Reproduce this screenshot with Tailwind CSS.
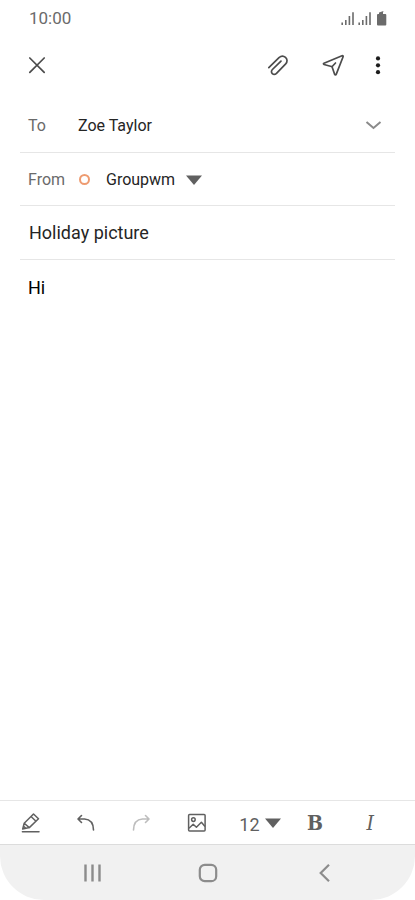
<!DOCTYPE html>
<html lang="en">
<head>
    <meta charset="utf-8" />
    <meta name="viewport" content="width=device-width, initial-scale=1" />
    <script src="https://cdn.jsdelivr.net/npm/@tailwindcss/browser@4"></script>
    <title>Holiday picture</title>
</head>
<body class="bg-white font-['Roboto',sans-serif] text-[#252525]">
    <div class="flex flex-col min-h-screen">

        <!-- status bar -->
        <div class="flex items-center justify-between h-9 pt-px pl-[29px] pr-7 text-[#6b6b6b]">
            <span class="text-[17px]">10:00</span>
            <div class="flex items-center gap-1">
                <svg class="w-[13px] h-4" viewBox="0 0 13 16" fill="none" stroke="currentColor" stroke-width="1.6">
                    <path d="M1.2 14v-2.5M4.8 14V9M8.4 14V5M12 14V1.2" />
                </svg>
                <svg class="w-[13px] h-4" viewBox="0 0 13 16" fill="none" stroke="currentColor" stroke-width="1.6">
                    <path d="M1.2 14v-2.5M4.8 14V9M8.4 14V5M12 14V1.2" />
                </svg>
                <svg class="w-3 h-4" viewBox="0 0 12 16" fill="currentColor">
                    <path d="M4 1.5 8.5 0l-.5 1.500v1.500h2.300a1 1 0 0 1 1 1v9.500a1 1 0 0 1-1 1H3a1 1 0 0 1-1-1V4a1 1 0 0 1 1-1h1z" />
                </svg>
            </div>
        </div>

        <!-- top actions -->
        <header class="flex items-center h-[58px] px-[25px] text-[#4c4c4c]">
            <button type="button" aria-label="Close">
                <svg class="w-6 h-6" viewBox="0 0 24 24" fill="none" stroke="currentColor" stroke-width="1.7" stroke-linecap="round">
                    <path d="m4.8 5 14.4 14.4M19.2 5 4.800 19.400" />
                </svg>
            </button>
            <button type="button" aria-label="Attach" class="ml-auto mr-[31px]">
                <svg class="w-6 h-6" viewBox="0 0 24 24" fill="none" stroke="currentColor" stroke-width="1.7" stroke-linecap="round" stroke-linejoin="round">
                    <path d="M1.800 14.600 12 4.600c2-1.800 4.600-1.900 6.500-.3 2 1.700 2 4.800.2 6.600L9.500 20.300c-1.300 1.300-3.100 1.300-4.200.3-1.200-1.100-1.100-2.900.1-4.100l8.600-8.400" />
                </svg>
            </button>
            <button type="button" aria-label="Send" class="mr-5">
                <svg class="w-6 h-6" viewBox="0 0 24 24" fill="none" stroke="currentColor" stroke-width="1.7" stroke-linecap="round" stroke-linejoin="round">
                    <path d="M2 10.300 20 2.700c.8-.3 1.400.3 1.100 1.100L14.200 21.400c-.3.8-1.200.8-1.500.1l-2.400-7.100a1.500 1.500 0 0 0-.9-.9L2 11.500c-.8-.3-.7-.9 0-1.200zM10.200 13.500l3.300-3.500" />
                </svg>
            </button>
            <button type="button" aria-label="More options" class="text-[#1c1c1c]">
                <svg class="w-6 h-6" viewBox="0 0 24 24" fill="currentColor">
                    <circle cx="12" cy="5.4" r="2.1" />
                    <circle cx="12" cy="12.3" r="2.1" />
                    <circle cx="12" cy="19.2" r="2.1" />
                </svg>
            </button>
        </header>

        <!-- message -->
        <form class="flex flex-col grow px-5 pt-[5px]">
            <div class="flex items-center h-[54px] pt-px pl-2 pr-3 border-b border-[#e6e6e6]">
                <label for="to" class="w-[50px] shrink-0 text-[#6a6a6a]">To</label>
                <input id="to" type="text" value="Zoe Taylor" class="grow min-w-0 outline-none" />
                <button type="button" aria-label="Show Cc and Bcc" class="text-[#8a8a8a]">
                    <svg class="w-[18px] h-[18px]" viewBox="0 0 18 18" fill="none" stroke="currentColor" stroke-width="2">
                        <path d="m1.500 5 7 6 7-6" />
                    </svg>
                </button>
            </div>
            <div class="flex items-center h-[53px] pt-px pl-2 border-b border-[#e6e6e6]">
                <label for="from" class="w-[50px] shrink-0 text-[#6a6a6a]">From</label>
                <span class="size-[11px] ml-px mb-px border-2 border-[#ee9b70] rounded-full"></span>
                <div class="relative ml-4">
                    <select id="from" class="appearance-none outline-none pr-[26px]">
                        <option>Groupwm</option>
                    </select>
                    <svg class="absolute right-0 top-1 w-4 h-4 pointer-events-none text-[#606060]" viewBox="0 0 16 16" fill="currentColor">
                        <path d="M0 3.5h16L8 13z" />
                    </svg>
                </div>
            </div>
            <div class="flex items-center h-[54px] pl-[9px] border-b border-[#e6e6e6]">
                <input id="subject" type="text" aria-label="Subject" value="Holiday picture" class="w-full text-[18px] outline-none" />
            </div>
            <textarea id="message" aria-label="Message" class="grow px-2 pt-4 text-[18px] leading-6 text-black resize-none outline-none">Hi</textarea>
        </form>

        <!-- formatting toolbar -->
        <div class="grid grid-cols-[1fr_1fr_1fr_1fr_63px_1fr_1fr] items-center justify-items-center h-11 pl-[3px] pr-[17px] border-t border-[#e6e6e6] text-[#606060]">
            <button type="button" aria-label="Draw">
                <svg class="w-5 h-5" viewBox="0 0 20 20" fill="none" stroke="currentColor" stroke-width="1.5" stroke-linejoin="round" stroke-linecap="round">
                    <path d="M1.700 16 3.200 10.200l9.300-9.200 5 4.700-9.200 8.900zM3.200 10.200l5.100 4.400M10 3.500l5 4.700M2.600 13.300l2 1.800" />
                    <path d="M1.400 18.700h16.600" />
                </svg>
            </button>
            <button type="button" aria-label="Undo">
                <svg class="w-5 h-5" viewBox="0 0 20 20" fill="none" stroke="currentColor" stroke-width="1.6" stroke-linecap="round" stroke-linejoin="round">
                    <path d="M5.500 2.500 2 6l3.500 3.500M2.200 6h6.300c5.500.4 8.900 4.500 9 11" />
                </svg>
            </button>
            <button type="button" aria-label="Redo" class="text-[#bdbdbd]">
                <svg class="w-5 h-5" viewBox="0 0 20 20" fill="none" stroke="currentColor" stroke-width="1.6" stroke-linecap="round" stroke-linejoin="round">
                    <path d="M14.500 2.500 18 6l-3.500 3.500M17.800 6h-6.300c-5.500.4-8.900 4.500-9 11" />
                </svg>
            </button>
            <button type="button" aria-label="Insert image">
                <svg class="w-5 h-5" viewBox="0 0 20 20" fill="none" stroke="currentColor" stroke-width="1.5" stroke-linejoin="round">
                    <rect x="1.600" y="1.600" width="16.500" height="16.500" rx="1" />
                    <circle cx="6.400" cy="6.600" r="1.800" />
                    <path d="M2 15.300 6.200 11.300l3.200 3 5-5 3.600 4.200" />
                </svg>
            </button>
            <div class="relative justify-self-end mr-1.5 pt-1">
                <select aria-label="Font size" class="appearance-none outline-none text-[18px] pr-[21px]">
                    <option>12</option>
                </select>
                <svg class="absolute right-0 top-2 w-4 h-4 pointer-events-none" viewBox="0 0 16 16" fill="currentColor">
                    <path d="M0 3.5h16L8 13z" />
                </svg>
            </div>
            <button type="button" aria-label="Bold" class="font-['DejaVu_Serif_Condensed','DejaVu_Serif',serif] font-bold text-[21px] leading-6">B</button>
            <button type="button" aria-label="Italic" class="font-['DejaVu_Serif_Condensed','DejaVu_Serif',serif] italic text-[21px] leading-6">I</button>
        </div>

        <!-- system navigation -->
        <nav class="grid grid-cols-3 items-center justify-items-center h-14 pl-[35px] pr-[33px] bg-[#f1f1f1] border-t border-[#dcdcdc] rounded-b-[44px] text-[#8c8c8c]">
            <button type="button" aria-label="Recent apps">
                <svg class="w-5 h-5" viewBox="0 0 20 20" fill="none" stroke="currentColor" stroke-width="2.4">
                    <path d="M2.500 1.500v17M9.500 1.500v17M16.500 1.500v17" />
                </svg>
            </button>
            <button type="button" aria-label="Home">
                <svg class="w-5 h-5" viewBox="0 0 20 20" fill="none" stroke="currentColor" stroke-width="2.200">
                    <rect x="1.800" y="1.800" width="16.400" height="16.400" rx="5" />
                </svg>
            </button>
            <button type="button" aria-label="Back">
                <svg class="w-5 h-5" viewBox="0 0 20 20" fill="none" stroke="currentColor" stroke-width="2.200">
                    <path d="m15 1.800-8.300 8.200 8.300 8.200" />
                </svg>
            </button>
        </nav>

    </div>
</body>
</html>
